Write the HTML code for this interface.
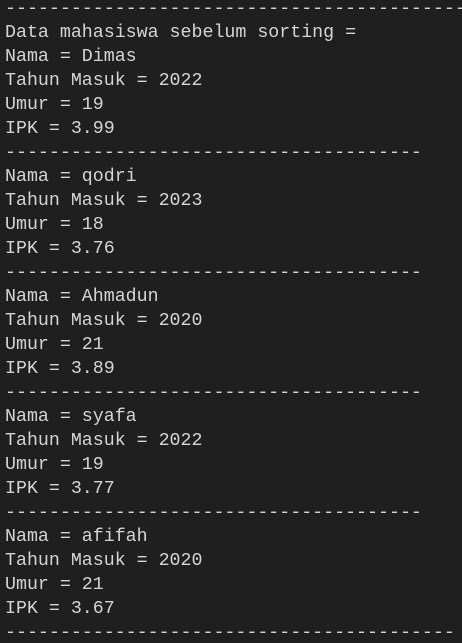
<!DOCTYPE html>
<html><head><style>
html,body{margin:0;padding:0;background:#1f1f1f;width:462px;height:643px;overflow:hidden}
.w{position:absolute;left:0;top:0;width:462px;height:643px;overflow:hidden}
pre{margin:0;position:absolute;left:5px;top:-3px;width:457px;overflow:hidden;font-family:"Liberation Mono",monospace;font-size:18.3px;line-height:24px;color:#d4d4d4;white-space:pre}
</style></head><body><div class="w"><pre>------------------------------------------
Data mahasiswa sebelum sorting =
Nama = Dimas
Tahun Masuk = 2022
Umur = 19
IPK = 3.99
--------------------------------------
Nama = qodri
Tahun Masuk = 2023
Umur = 18
IPK = 3.76
--------------------------------------
Nama = Ahmadun
Tahun Masuk = 2020
Umur = 21
IPK = 3.89
--------------------------------------
Nama = syafa
Tahun Masuk = 2022
Umur = 19
IPK = 3.77
--------------------------------------
Nama = afifah
Tahun Masuk = 2020
Umur = 21
IPK = 3.67
-----------------------------------------</pre></div></body></html>
